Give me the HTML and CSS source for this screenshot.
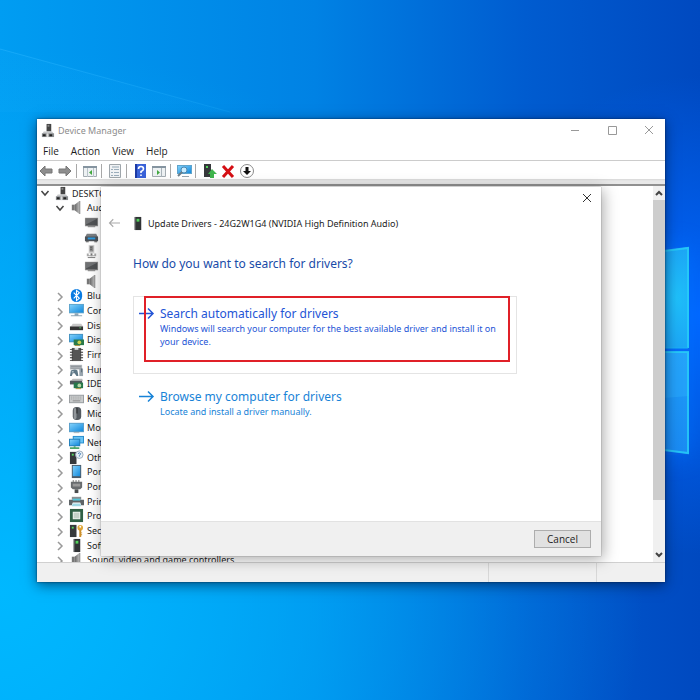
FILE: index.html
```html
<!DOCTYPE html>
<html lang="en">
<head>
<meta charset="utf-8">
<meta name="viewport" content="width=device-width, initial-scale=1">
<title>Device Manager</title>
<link rel="stylesheet" href="styles.css">
</head>
<body>
<svg class="sprite" aria-hidden="true">
  <defs>
    <linearGradient id="screen" x1="0" y1="0" x2="1" y2="1"><stop offset="0" stop-color="#7fd0fb"/><stop offset="1" stop-color="#1389dc"/></linearGradient>
    <linearGradient id="cone" x1="0" y1="0" x2="1" y2="0"><stop offset="0" stop-color="#666"/><stop offset="1" stop-color="#bbb"/></linearGradient>
  </defs>
  <symbol id="i-computer" viewBox="0 0 16 16"><path d="M7 1h5v8H7z" fill="#444"/><path d="M8 2h2v2H8z" fill="#888"/><path d="M4 9h9l2 3H2z" fill="#c4c6c8"/><path d="M2 11h13v4H2z" fill="#8b8e90"/><path d="M3 12h3v2H3zM10 12h3v2h-3z" fill="#222"/><path d="M7 11h2v4H7z" fill="#ddd"/></symbol>
  <symbol id="i-speaker" viewBox="0 0 16 16"><path d="M3 5h3v6H3z" fill="#777"/><path d="M6 5l5-4v14l-5-4z" fill="url(#cone)"/><path d="M11 1h1v14h-1z" fill="#777"/></symbol>
  <symbol id="i-tv" viewBox="0 0 16 16"><path d="M1 3h14v9H1z" fill="#8a8a8a"/><path d="M2 4h12v7H2z" fill="#505254"/><path d="M2 4h12L2 10z" fill="#707274"/><path d="M4 12h8v1H4z" fill="#777"/></symbol>
  <symbol id="i-receiver" viewBox="0 0 16 16"><path d="M3 4h10l2 4H1z" fill="#7a7e82"/><path d="M1 7h14v5H1z" fill="#4c5258"/><path d="M4 8h8v2H4z" fill="#2b9ae0"/><path d="M2 12h3v1H2zM11 12h3v1h-3z" fill="#555"/></symbol>
  <symbol id="i-mic" viewBox="0 0 16 16"><path d="M5 1h6v9H5z" fill="#d4d4d4"/><path d="M6 2h4v6H6z" fill="#8c8c8c"/><path d="M7 3h1v1H7zM7 5h1v1H7z" fill="#333"/><path d="M7 10h2v3H7z" fill="#777"/><path d="M3 10h2v2h6v-2h2v3H3z" fill="#aaa"/><path d="M4 14h8v1H4z" fill="#777"/></symbol>
  <symbol id="i-bluetooth" viewBox="0 0 16 16"><rect x="2" y="1" width="12" height="14" rx="6" fill="#087be2"/><path d="M5 5l6 6-3 2.500V2.500L11 5l-6 6" fill="none" stroke="#fff" stroke-width="1.200"/></symbol>
  <symbol id="i-monitor" viewBox="0 0 16 16"><path d="M0 1h16v10H0z" fill="#5fa4cc"/><path d="M1 2h14v8H1z" fill="url(#screen)"/><path d="M6 11h4v2H6zM2 13h12v1H2z" fill="#8fa6b6"/></symbol>
  <symbol id="i-disk" viewBox="0 0 16 16"><path d="M4 6h9l2 3H2z" fill="#c8c8c8"/><path d="M1 9h14v4H1z" fill="#333"/><path d="M11 10h2v1h-2z" fill="#57c66b"/></symbol>
  <symbol id="i-display" viewBox="0 0 16 16"><path d="M0 2h15v9H0z" fill="#4592c0"/><path d="M1 3h13v7H1z" fill="url(#screen)"/><path d="M5 8h11v6H5z" fill="#2a7a4a"/><circle cx="11" cy="11" r="2" fill="#c9ce4c"/><path d="M6 14h6v1H6z" fill="#a48b32"/></symbol>
  <symbol id="i-chip" viewBox="0 0 16 16"><path d="M3 1h10v14H3z" fill="#555"/><path d="M1 2h3v1H1zM1 5h3v1H1zM1 8h3v1H1zM1 11h3v1H1zM1 14h3v1H1zM12 2h3v1h-3zM12 5h3v1h-3zM12 8h3v1h-3zM12 11h3v1h-3zM12 14h3v1h-3z" fill="#333"/><path d="M6 1h4v2H6z" fill="#ddd"/></symbol>
  <symbol id="i-hid" viewBox="0 0 16 16"><path d="M1 3h13v5H1z" fill="#b4b9bd"/><path d="M2 4h11v1H2zM2 6h11v1H2z" fill="#858c92"/><path d="M2 9q5-2 7 0l1 6H8l-2-3H4l-1 3H1z" fill="#5e7887"/><path d="M11 7h4v8h-4z" fill="#97a4ad"/><path d="M13 7h1v4h-1z" fill="#55656f"/><path d="M3 10h2v1H3z" fill="#dfe8ee"/></symbol>
  <symbol id="i-ide" viewBox="0 0 16 16"><path d="M4 3h10l1 2H2z" fill="#bbb"/><path d="M1 5h13v4H1z" fill="#50585a"/><path d="M5 7h10v6H5z" fill="#28784a"/><circle cx="11" cy="10" r="2" fill="#b7d7a6"/><path d="M7 13h6v1H7z" fill="#a48b32"/></symbol>
  <symbol id="i-keyboard" viewBox="0 0 16 16"><path d="M0 4h16v9H0z" fill="#989da0"/><path d="M1 5h14v7H1z" fill="#c9cccd"/><path d="M2 6.500h12M2 8.500h12" stroke="#999" stroke-dasharray="1 1"/><path d="M4 10.500h8" stroke="#888"/></symbol>
  <symbol id="i-mouse" viewBox="0 0 16 16"><rect x="4" y="1" width="9" height="14" rx="4" fill="#555b61"/><rect x="5" y="2" width="3" height="12" rx="2" fill="#92979b"/><path d="M8 2h1v6H8z" fill="#222"/></symbol>
  <symbol id="i-screen" viewBox="0 0 16 16"><path d="M0 3h16v10H0z" fill="#5b9fca"/><path d="M1 4h14v8H1z" fill="url(#screen)"/><path d="M5 13h6v1H5z" fill="#a5b0b8"/></symbol>
  <symbol id="i-network" viewBox="0 0 16 16"><path d="M4 1h12v8H4z" fill="#298dcb"/><path d="M5 2h10v6H5z" fill="#68c3f5"/><path d="M0 4h12v8H0z" fill="#237fb9"/><path d="M1 5h10v6H1z" fill="url(#screen)"/><path d="M5 12h2v1h4v2H1v-2h4z" fill="#4ba56b"/></symbol>
  <symbol id="i-other" viewBox="0 0 16 16"><path d="M1 2h7v13H1z" fill="#36393b"/><path d="M3 4h2v2H3z" fill="#54d65e"/><circle cx="11" cy="5" r="4" fill="#e9f1f7" stroke="#9aabba"/><path d="M9.500 4q1.500-2 3 0l-1.500 2v1" fill="none" stroke="#3f78b2"/></symbol>
  <symbol id="i-portable" viewBox="0 0 16 16"><path d="M3 1h10v14H3z" fill="#4c5b68"/><path d="M4 2h8v11H4z" fill="url(#screen)"/></symbol>
  <symbol id="i-port" viewBox="0 0 16 16"><path d="M4 1h1v3H4zM7 1h1v3H7zM10 1h1v3h-1z" fill="#777"/><path d="M2 3h12v6l-2 2H4L2 9z" fill="#686b6e"/><path d="M4 5h8v3H4z" fill="#999"/><path d="M6 11h4v4H6z" fill="#4a4c4e"/></symbol>
  <symbol id="i-printer" viewBox="0 0 16 16"><path d="M3 3h10v3H3z" fill="#8a8f92"/><path d="M0 6h16v6h-3l-1-3H4l-1 3H0z" fill="#5e6467"/><path d="M4 5h8v2H4z" fill="#52c5d9"/><path d="M4 10h8l1 3H3z" fill="#9ed8e4"/></symbol>
  <symbol id="i-cpu" viewBox="0 0 16 16"><path d="M1 1h14v14H1z" fill="#306045"/><path d="M4 4h8v8H4z" fill="#eef3ee"/><path d="M5 5h6v6H5z" fill="#c6d2c8"/></symbol>
  <symbol id="i-security" viewBox="0 0 16 16"><path d="M1 2h7v13H1z" fill="#36393b"/><path d="M3 4h2v2H3z" fill="#54d65e"/><circle cx="12" cy="5" r="3" fill="#dfa83a"/><circle cx="12" cy="4" r="1" fill="#fff"/><path d="M11 7h2v8h-2zM13 10h1v1h-1zM13 12h1v1h-1z" fill="#cd902b"/></symbol>
  <symbol id="i-tower" viewBox="0 0 16 16"><path d="M5 1h7v14H5z" fill="#303335"/><path d="M5 1h1v14H5z" fill="#6a6e70"/><path d="M7 3h3v3H7z" fill="#52d15b"/></symbol>
  <symbol id="i-prev" viewBox="0 0 16 16"><path d="M2 8l5-5v3h7v4H7v3z" fill="#8e8e8e" stroke="#777"/></symbol>
  <symbol id="i-next" viewBox="0 0 16 16"><path d="M14 8L9 3v3H2v4h7v3z" fill="#8e8e8e" stroke="#777"/></symbol>
  <symbol id="i-pane-left" viewBox="0 0 16 16"><path d="M1.500 3.500h13v10h-13z" fill="#edf1f3" stroke="#a3abb1"/><path d="M1 3h14v2H1z" fill="#8594a0"/><path d="M5 5h1v9H5zM11 5h1v9h-1z" fill="#b9c3ca"/><path d="M10 7v5L7 9.500z" fill="#42a83f"/></symbol>
  <symbol id="i-pane-right" viewBox="0 0 16 16"><path d="M1.500 3.500h13v10h-13z" fill="#edf1f3" stroke="#a3abb1"/><path d="M1 3h14v2H1z" fill="#8594a0"/><path d="M10 5h1v9h-1z" fill="#a9b3ba"/><path d="M6 7v5l3-2.500z" fill="#42a83f"/></symbol>
  <symbol id="i-props" viewBox="0 0 16 16"><path d="M2.500 1.500h11v13h-11z" fill="#f0f2f4" stroke="#9fa6ab"/><path d="M4 6.500h2M4 9.500h2M4 12.500h2M7 6.500h5M7 9.500h5M7 12.500h5" stroke="#9badbb"/><path d="M5 3h7v2H5z" fill="#c2cdd5"/></symbol>
  <symbol id="i-help" viewBox="0 0 16 16"><path d="M3 1h11v14H3z" fill="#3a62d8"/><path d="M3 1h2v14H3z" fill="#1d3ba4"/><path d="M6.500 6q0-2.500 2.500-2.500T11.500 6Q11.500 7.500 9 8.500V10M9 11.500v1.500" fill="none" stroke="#fff" stroke-width="1.600"/></symbol>
  <symbol id="i-scan" viewBox="0 0 16 16"><path d="M1 2h15v9H1z" fill="#5fa4cc"/><path d="M2 3h13v7H2z" fill="url(#screen)"/><circle cx="8" cy="7" r="3" fill="#c8ebfd" stroke="#4b87b0"/><path d="M6 9l-4 4" stroke="#6b7d88" stroke-width="2"/><path d="M6 13h7v1H6z" fill="#98a6af"/></symbol>
  <symbol id="i-update" viewBox="0 0 16 16"><path d="M3 1h7v13H3z" fill="#36393b"/><path d="M5 3h2v2H5z" fill="#54d65e"/><path d="M11 6l5 5h-3v4H9v-4H7z" fill="#3fb44c"/></symbol>
  <symbol id="i-remove" viewBox="0 0 16 16"><path d="M3 3l10 11M13 3L3 14" stroke="#d40f14" stroke-width="3"/></symbol>
  <symbol id="i-down" viewBox="0 0 16 16"><circle cx="8" cy="8" r="6.500" fill="#fff" stroke="#8b8b8b"/><path d="M6.500 4h3v4H12l-4 4-4-4h2.500z" fill="#111"/></symbol>
  <symbol id="i-chevron" viewBox="0 0 12 12"><path d="M4 3l4 4-4 4" fill="none" stroke="#999" stroke-width="1.500"/></symbol>
  <symbol id="i-open" viewBox="0 0 12 12"><path d="M2.500 4l3.500 4 3.500-4" fill="none" stroke="#444" stroke-width="1.500"/></symbol>
  <symbol id="i-arrow" viewBox="0 0 16 12"><path d="M0 6h14M9 1l5 5-5 5" fill="none" stroke="currentColor" stroke-width="1.500"/></symbol>
</svg>

<div class="desktop">
  <svg class="wallpaper" viewBox="0 0 700 700" preserveAspectRatio="none" aria-hidden="true">
    <defs>
      <linearGradient id="beam" x1="0" y1="0" x2="1" y2="0"><stop offset="0" stop-color="#29b5ff" stop-opacity=".5"/><stop offset="1" stop-color="#29b5ff" stop-opacity="0.2"/></linearGradient>
      <radialGradient id="pane-top" cx=".75" cy=".5" r=".8"><stop offset="0" stop-color="#1fc0fa"/><stop offset="1" stop-color="#1a97f2"/></radialGradient>
      <linearGradient id="pane-bottom" x1="0" y1="0" x2="0" y2="1"><stop offset="0" stop-color="#1e9cf8"/><stop offset="1" stop-color="#1a8af2"/></linearGradient>
      <filter id="glow" x="-3" y="-1" width="7" height="3"><feGaussianBlur stdDeviation="12"/></filter>
    </defs>
    <path d="M0 49L230 112H0z" fill="url(#beam)" opacity=".15"/>
    <path d="M0 49L230 112" stroke="url(#beam)"/>
    <path d="M650 247h39v208h-39z" fill="#0b76ff" opacity=".6" filter="url(#glow)"/>
    <path d="M640 352H689V454L640 447z" fill="url(#pane-bottom)"/>
    <path d="M640 254L689 247V348H640z" fill="url(#pane-top)"/>
    <path d="M640 400L689 396V352H640z" fill="#2aa9fc" opacity=".5"/>
    <path d="M640 254L688 248V348M640 352H688V453L640 447" fill="none" stroke="#27d0f8" stroke-width="2" opacity=".8"/>
    <path d="M640 348H688" stroke="#1bb2f5"/>
  </svg>

  <main class="window">
    <header class="titlebar">
      <svg class="icon"><use href="#i-computer"/></svg>
      <h1 class="window-title">Device Manager</h1>
      <div class="window-controls">
        <button class="control" aria-label="Minimize"><svg viewBox="0 0 10 10"><path d="M1 5.500h8"/></svg></button>
        <button class="control" aria-label="Maximize"><svg viewBox="0 0 10 10"><path d="M1.500 1.500h8v8h-8z"/></svg></button>
        <button class="control" aria-label="Close"><svg viewBox="0 0 10 10"><path d="M1 1l8 8M9 1l-8 8"/></svg></button>
      </div>
    </header>

    <nav class="menubar">
      <button>File</button><button>Action</button><button>View</button><button>Help</button>
    </nav>

    <div class="toolbar">
      <button aria-label="Back"><svg><use href="#i-prev"/></svg></button>
      <button aria-label="Forward"><svg><use href="#i-next"/></svg></button>
      <span class="separator"></span>
      <button aria-label="Show console tree"><svg><use href="#i-pane-left"/></svg></button>
      <span class="separator"></span>
      <button aria-label="Properties"><svg><use href="#i-props"/></svg></button>
      <span class="separator"></span>
      <button aria-label="Help topics"><svg><use href="#i-help"/></svg></button>
      <button aria-label="Show action pane"><svg><use href="#i-pane-right"/></svg></button>
      <span class="separator"></span>
      <button aria-label="Scan for hardware changes"><svg><use href="#i-scan"/></svg></button>
      <span class="separator"></span>
      <button aria-label="Update driver"><svg><use href="#i-update"/></svg></button>
      <button aria-label="Uninstall device"><svg><use href="#i-remove"/></svg></button>
      <button aria-label="Disable device"><svg><use href="#i-down"/></svg></button>
    </div>

    <div class="content">
      <ul class="tree">
        <li><button aria-label="Collapse"><svg><use href="#i-open"/></svg></button><svg class="icon"><use href="#i-computer"/></svg>DESKTOP</li>
        <li class="child"><button aria-label="Collapse"><svg><use href="#i-open"/></svg></button><svg class="icon"><use href="#i-speaker"/></svg>Audio</li>
        <li class="leaf"><svg class="icon"><use href="#i-tv"/></svg></li>
        <li class="leaf"><svg class="icon"><use href="#i-receiver"/></svg></li>
        <li class="leaf"><svg class="icon"><use href="#i-mic"/></svg></li>
        <li class="leaf"><svg class="icon"><use href="#i-tv"/></svg></li>
        <li class="leaf"><svg class="icon"><use href="#i-speaker"/></svg></li>
        <li class="child"><button aria-label="Expand"><svg><use href="#i-chevron"/></svg></button><svg class="icon"><use href="#i-bluetooth"/></svg>Bluetooth</li>
        <li class="child"><button aria-label="Expand"><svg><use href="#i-chevron"/></svg></button><svg class="icon"><use href="#i-monitor"/></svg>Computer</li>
        <li class="child"><button aria-label="Expand"><svg><use href="#i-chevron"/></svg></button><svg class="icon"><use href="#i-disk"/></svg>Disk drives</li>
        <li class="child"><button aria-label="Expand"><svg><use href="#i-chevron"/></svg></button><svg class="icon"><use href="#i-display"/></svg>Display</li>
        <li class="child"><button aria-label="Expand"><svg><use href="#i-chevron"/></svg></button><svg class="icon"><use href="#i-chip"/></svg>Firmware</li>
        <li class="child"><button aria-label="Expand"><svg><use href="#i-chevron"/></svg></button><svg class="icon"><use href="#i-hid"/></svg>Human</li>
        <li class="child"><button aria-label="Expand"><svg><use href="#i-chevron"/></svg></button><svg class="icon"><use href="#i-ide"/></svg>IDE</li>
        <li class="child"><button aria-label="Expand"><svg><use href="#i-chevron"/></svg></button><svg class="icon"><use href="#i-keyboard"/></svg>Keyboards</li>
        <li class="child"><button aria-label="Expand"><svg><use href="#i-chevron"/></svg></button><svg class="icon"><use href="#i-mouse"/></svg>Mice</li>
        <li class="child"><button aria-label="Expand"><svg><use href="#i-chevron"/></svg></button><svg class="icon"><use href="#i-screen"/></svg>Monitors</li>
        <li class="child"><button aria-label="Expand"><svg><use href="#i-chevron"/></svg></button><svg class="icon"><use href="#i-network"/></svg>Network</li>
        <li class="child"><button aria-label="Expand"><svg><use href="#i-chevron"/></svg></button><svg class="icon"><use href="#i-other"/></svg>Other</li>
        <li class="child"><button aria-label="Expand"><svg><use href="#i-chevron"/></svg></button><svg class="icon"><use href="#i-portable"/></svg>Portable</li>
        <li class="child"><button aria-label="Expand"><svg><use href="#i-chevron"/></svg></button><svg class="icon"><use href="#i-port"/></svg>Ports</li>
        <li class="child"><button aria-label="Expand"><svg><use href="#i-chevron"/></svg></button><svg class="icon"><use href="#i-printer"/></svg>Print</li>
        <li class="child"><button aria-label="Expand"><svg><use href="#i-chevron"/></svg></button><svg class="icon"><use href="#i-cpu"/></svg>Processors</li>
        <li class="child"><button aria-label="Expand"><svg><use href="#i-chevron"/></svg></button><svg class="icon"><use href="#i-security"/></svg>Security</li>
        <li class="child"><button aria-label="Expand"><svg><use href="#i-chevron"/></svg></button><svg class="icon"><use href="#i-tower"/></svg>Software</li>
        <li class="child"><button aria-label="Expand"><svg><use href="#i-chevron"/></svg></button><svg class="icon"><use href="#i-speaker"/></svg>Sound, video and game controllers</li>
      </ul>
      <div class="scrollbar">
        <button aria-label="Scroll up"><svg viewBox="0 0 12 12"><path d="M3 8l3-3 3 3"/></svg></button>
        <span class="thumb"></span>
        <button aria-label="Scroll down"><svg viewBox="0 0 12 12"><path d="M3 4l3 3 3-3"/></svg></button>
      </div>
    </div>

    <footer class="statusbar"><span></span><span></span><span></span></footer>

    <section class="dialog" role="dialog" aria-labelledby="dialog-title">
      <div class="dialog-top">
        <button class="dialog-close" aria-label="Close dialog"><svg viewBox="0 0 10 10"><path d="M1 1l8 8M9 1l-8 8"/></svg></button>
      </div>
      <div class="dialog-header">
        <button class="dialog-back" aria-label="Previous page"><svg><use href="#i-arrow"/></svg></button>
        <svg class="icon"><use href="#i-tower"/></svg>
        <h2 class="dialog-title" id="dialog-title">Update Drivers - 24G2W1G4 (NVIDIA High Definition Audio)</h2>
      </div>
      <div class="dialog-body">
        <h3 class="question">How do you want to search for drivers?</h3>
        <button class="option selected">
          <svg><use href="#i-arrow"/></svg>
          <span class="option-text"><span class="option-title">Search automatically for drivers</span><span class="option-detail">Windows will search your computer for the best available driver and install it on your device.</span></span>
          <span class="highlight"></span>
        </button>
        <button class="option">
          <svg><use href="#i-arrow"/></svg>
          <span class="option-text"><span class="option-title">Browse my computer for drivers</span><span class="option-detail">Locate and install a driver manually.</span></span>
        </button>
      </div>
      <div class="dialog-footer"><button class="cancel">Cancel</button></div>
    </section>
  </main>
</div>
</body>
</html>
```
FILE: styles.css
```css
* {
  box-sizing: border-box;
}

body {
  margin: 0;
  color: #1c1c1c;
  font: 9px/13px "Noto Sans", "Open Sans", sans-serif;
}

button {
  display: block;
  margin: 0;
  padding: 0;
  border: 0;
  background: none;
  color: inherit;
  font: inherit;
  text-align: left;
}

h1,
h2,
h3 {
  margin: 0;
  font: inherit;
}

svg {
  display: block;
  flex: none;
}

.sprite {
  position: absolute;
  width: 0;
  height: 0;
}

.icon {
  width: 15px;
  height: 15px;
}

/* Desktop */
.desktop {
  position: relative;
  display: grid;
  min-height: 100vh;
  padding: 119px 35px 118px 37px;
  overflow: hidden;
  background:
    radial-gradient(circle at 100% 45%, #0066ff 0%, rgba(0, 98, 240, 0) 30%),
    radial-gradient(ellipse at 0% 85%, #00b8ff 0%, rgba(0, 170, 250, 0) 65%),
    linear-gradient(90deg, #009df2 0%, #0082e4 45%, #005cd0 75%, #0049c0 100%);
}

.wallpaper {
  position: absolute;
  inset: 0;
  width: 100%;
  height: 100%;
}

/* Main window */
.window {
  position: relative;
  display: flex;
  flex-direction: column;
  min-width: 0;
  background: #fff;
  box-shadow: 0 0 2px rgba(0, 20, 50, 0.7), 0 3px 12px rgba(0, 20, 50, 0.6);
}

.titlebar {
  display: flex;
  align-items: center;
  gap: 3px;
  height: 22px;
  padding-left: 3px;
}

.window-title {
  flex: 1;
  color: #8c8c8c;
}

.window-controls {
  display: flex;
  gap: 5px;
}

.control {
  display: grid;
  place-items: center;
  width: 32px;
  height: 20px;
}

.control svg,
.dialog-close svg {
  width: 10px;
  height: 10px;
  fill: none;
  stroke: #999;
}

.menubar {
  display: flex;
  gap: 12px;
  align-items: center;
  height: 20px;
  padding-left: 6px;
  border-bottom: 1px solid #ccc;
  font: 10px/14px "Open Sans", "Noto Sans", sans-serif;
}

.toolbar {
  display: flex;
  gap: 3px;
  align-items: flex-start;
  height: 25px;
  padding: 1px 0 0 1px;
  border-bottom: 2px solid #909090;
  background: linear-gradient(#fff 18px, #d8d8d8 18px, #e8e8e8 20px);
}

.toolbar svg {
  width: 16px;
  height: 18px;
}

.separator {
  width: 1px;
  height: 14px;
  margin: 2px 2px 0 0;
  background: #a8a8a8;
}

.content {
  display: flex;
  flex: 1 1 0;
  min-height: 0;
}

.tree {
  flex: 1;
  margin: 0;
  padding: 0 0 0 2px;
  overflow: hidden;
  list-style: none;
}

.tree li {
  display: flex;
  gap: 3px;
  align-items: center;
  height: 15px;
  white-space: nowrap;
}

.tree li:nth-child(3n + 1) {
  height: 14px;
}

.tree .child {
  padding-left: 15px;
}

.tree .leaf {
  padding-left: 45px;
}

.tree button,
.tree button svg {
  width: 12px;
  height: 12px;
}

.scrollbar {
  display: flex;
  flex-direction: column;
  width: 12px;
  background: #f0f0f0;
}

.scrollbar button {
  height: 14px;
}

.scrollbar svg {
  width: 12px;
  height: 14px;
  fill: none;
  stroke: #444;
  stroke-width: 2;
}

.thumb {
  flex: 0 1 300px;
  background: #cdcdcd;
}

.scrollbar button:last-child {
  margin-top: auto;
}

.statusbar {
  display: flex;
  height: 20px;
  border-top: 1px solid #d0d0d0;
  background: #f0f0f0;
}

.statusbar span {
  width: 108px;
  border-right: 1px solid #d8d8d8;
}

.statusbar span:first-child {
  flex: 1;
}

.statusbar span:last-child {
  width: 68px;
  border: 0;
}

/* Update Drivers dialog */
.dialog {
  position: absolute;
  inset: 68px 64px 26px;
  display: flex;
  flex-direction: column;
  background: #fff;
  box-shadow: 0 0 1px rgba(0, 0, 0, 0.5), 2px 3px 14px rgba(0, 0, 0, 0.35);
}

.dialog-top {
  display: flex;
  justify-content: flex-end;
  height: 26px;
}

.dialog-close {
  display: grid;
  place-items: center;
  width: 28px;
  height: 22px;
}

.dialog-close svg {
  stroke: #333;
}

.dialog-header {
  display: flex;
  gap: 3px;
  align-items: center;
  height: 20px;
  padding-left: 7px;
}

.dialog-back {
  margin-right: 7px;
  color: #aaa;
}

.dialog-back svg {
  width: 12px;
  height: 10px;
  transform: scaleX(-1);
}

.dialog-body {
  flex: 1;
  padding: 22px 84px 0 32px;
}

.question {
  margin-bottom: 23px;
  color: #184ba8;
  font-size: 12px;
  line-height: 18px;
}

.option {
  position: relative;
  display: flex;
  gap: 5px;
  align-items: flex-start;
  width: 100%;
  padding: 8px 14px 8px 5px;
  border: 1px solid transparent;
  color: #1883d7;
}

.option.selected {
  min-height: 78px;
  margin-bottom: 5px;
  border-color: #e4e4e4;
  color: #2455d6;
}

.option svg {
  width: 16px;
  height: 17px;
}

.option-text,
.option-title,
.option-detail {
  display: block;
}

.option-title {
  font-size: 12px;
  line-height: 17px;
}

.option-detail {
  line-height: 13px;
}

.highlight {
  position: absolute;
  inset: -1px 6px 11px 10px;
  border: 2px solid #e02028;
}

.dialog-footer {
  display: flex;
  justify-content: flex-end;
  align-items: center;
  height: 35px;
  padding-right: 10px;
  border-top: 1px solid #e2e2e2;
  background: #f0f0f0;
}

.cancel {
  width: 57px;
  height: 18px;
  border: 1px solid #adadad;
  background: #e1e1e1;
  font: 10px/14px "Open Sans", "Noto Sans", sans-serif;
  text-align: center;
}
```
